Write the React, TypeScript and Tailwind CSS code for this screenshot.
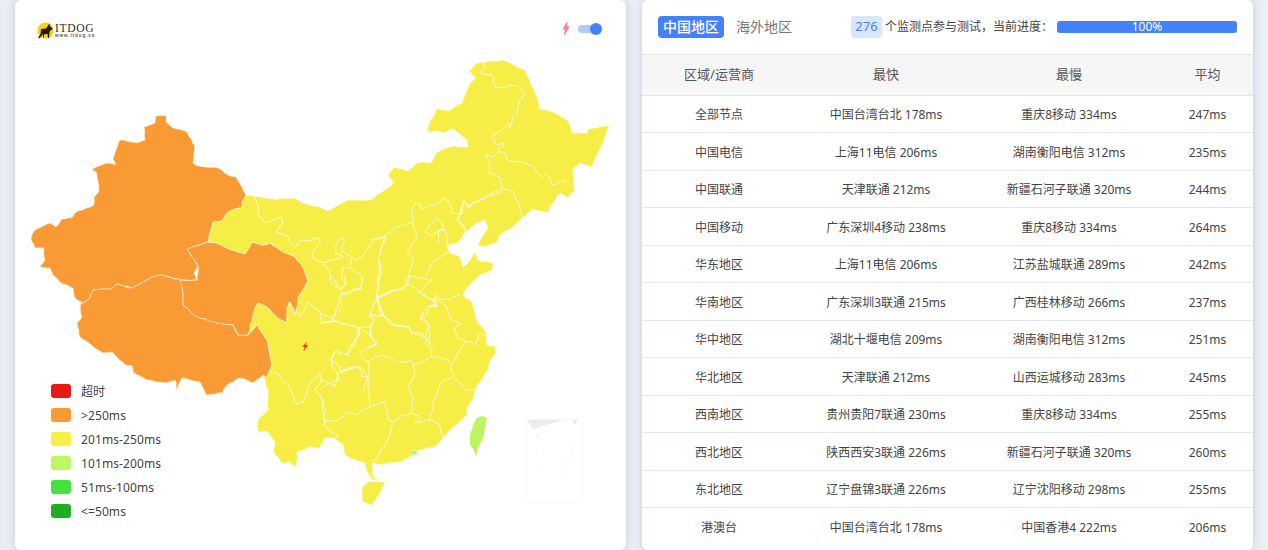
const rows = [
  ["全部节点", "中国台湾台北 178ms", "重庆8移动 334ms", "247ms"],
  ["中国电信", "上海11电信 206ms", "湖南衡阳电信 312ms", "235ms"],
  ["中国联通", "天津联通 212ms", "新疆石河子联通 320ms", "244ms"],
  ["中国移动", "广东深圳4移动 238ms", "重庆8移动 334ms", "264ms"],
  ["华东地区", "上海11电信 206ms", "江苏盐城联通 289ms", "242ms"],
  ["华南地区", "广东深圳3联通 215ms", "广西桂林移动 266ms", "237ms"],
  ["华中地区", "湖北十堰电信 209ms", "湖南衡阳电信 312ms", "251ms"],
  ["华北地区", "天津联通 212ms", "山西运城移动 283ms", "245ms"],
  ["西南地区", "贵州贵阳7联通 230ms", "重庆8移动 334ms", "255ms"],
  ["西北地区", "陕西西安3联通 226ms", "新疆石河子联通 320ms", "260ms"],
  ["东北地区", "辽宁盘锦3联通 226ms", "辽宁沈阳移动 298ms", "255ms"],
  ["港澳台", "中国台湾台北 178ms", "中国香港4 222ms", "206ms"],
];

const legend = [
  ["bg-[#e71a18]", "超时"],
  ["bg-[#f99a35]", ">250ms"],
  ["bg-[#f8ee46]", "201ms-250ms"],
  ["bg-[#bcf764]", "101ms-200ms"],
  ["bg-[#41e341]", "51ms-100ms"],
  ["bg-[#22ac22]", "<=50ms"],
];

const YELLOW = "#f6ee47";
const ORANGE = "#f99a35";

const xinjiang =
  "156,116 166,116 166,122 173,128 187,132 195,147 193,163 197,166 218,168 230,176 236,177 246,195 243,200 242,207 235,209 227,213 222,221 213,222 208,242 187,249 192,257 198,266 194,273 197,280 182,280 160,275 150,278 132,288 117,284 110,289 93,290 90,298 80,305 82,302 75,298 73,288 60,282 53,275 50,268 40,267 45,260 44,248 35,248 31,238 35,230 50,223 56,227 62,219 72,218 75,213 94,205 94,197 99,191 97,173 92,169 108,163 116,165 113,159 120,140 137,143 145,140 144,127 155,123";
const qinghai =
  "208,242 217,243 227,248 245,254 252,242 263,245 270,243 283,252 295,257 303,267 306,275 308,282 298,298 298,303 295,315 290,302 287,308 287,323 277,318 267,307 258,303 255,308 257,323 248,335 238,335 233,325 217,323 197,317 183,305 183,292 180,280 197,280 198,266 192,257 187,249";
const tibet =
  "80,305 90,298 93,290 110,289 117,284 132,288 150,278 160,275 182,280 183,292 183,305 197,317 217,323 233,325 238,335 248,335 257,325 268,342 272,365 267,378 263,375 253,383 240,378 227,385 222,393 206,395 200,382 182,378 177,390 175,380 165,383 157,382 147,380 133,372 132,366 125,365 112,352 103,353 80,337 77,323 82,317";
const china =
  "246,195 253,196 273,199 295,198 303,203 320,207 328,211 348,200 370,200 380,193 393,184 388,175 394,167 408,171 417,163 432,162 437,152 453,146 468,147 467,140 453,129 443,133 437,131 430,133 427,128 437,108 448,111 462,103 470,83 476,78 469,71 477,63 503,60 517,67 525,70 537,97 540,109 553,112 568,121 572,133 587,133 588,129 609,125 606,135 598,153 592,167 580,163 573,169 575,190 568,198 560,193 547,213 533,209 523,218 513,227 500,235 497,242 483,247 478,245 482,237 488,227 485,220 477,223 465,233 457,243 447,245 450,253 460,257 463,267 468,263 475,252 478,260 493,263 492,270 480,275 467,288 463,295 472,302 478,323 486,332 487,345 495,346 496,353 490,360 488,370 480,382 475,390 473,400 467,408 467,415 452,428 443,438 435,447 420,450 410,457 400,462 380,465 372,463 373,477 380,478 372,480 367,472 365,463 355,460 345,455 343,445 333,438 325,438 320,448 310,447 297,452 297,467 292,465 290,462 282,463 274,453 275,443 268,432 258,432 258,420 268,410 268,390 263,375 267,378 272,365 268,342 257,325 248,335 255,308 258,303 267,307 277,318 287,323 287,308 290,302 295,315 298,303 298,298 308,282 306,275 303,267 295,257 283,252 270,243 263,245 252,242 245,254 227,248 217,243 208,242 213,222 222,221 227,213 235,209 242,207 243,200";
const hainan = "362,488 368,482 385,482 380,493 372,505 363,502";
const taiwan = "482,416 487,418 485,428 483,438 478,448 476,457 474,450 470,445 470,435 474,423 477,418";
const hk = "410,454 413,450 416,450 418,454 414,455";

const z8 = [
  "42,17 58,65 50,68 75,98 125,83 128,100 108,125 145,140 158,165 172,168 178,152 208,152 238,142 240,160 218,188 218,205 248,218 310,200 288,190 290,160 305,145 315,150 305,185 335,200 352,212 375,190 400,150 420,145 437,137 415,210 420,240 415,290 410,322 470,300 480,298",
  "335,200 328,232 308,232 305,265 318,280 302,300 275,280 268,240 248,218",
  "328,235 367,258 362,295 335,300 335,312 310,312 300,322 305,350 285,372 275,395 245,398 240,365 205,338 190,365 175,380 168,362 145,335",
  "275,390 325,405 358,412 352,440 330,475",
  "358,415 395,440 410,465 380,475",
  "410,322 430,375 388,378 405,390 390,410 395,440",
  "430,375 470,408 480,410",
];
const z9 = [
  "0,150 45,140 75,112 130,97 125,65 135,40 150,42 155,60 210,35 225,22 240,45 245,70 275,72 278,40 285,32 300,50 345,22 395,5 400,0",
  "130,97 140,145 112,182 130,210 115,258 165,268",
  "45,140 25,210 32,240 20,325",
  "20,325 70,300 100,298 118,258",
  "20,325 40,375 60,400 85,408 118,408 125,428 150,430 170,445 165,458 180,480",
  "165,268 185,270 150,305 172,325 190,328 200,315 215,330 245,328 270,310",
  "165,268 185,220 235,185",
  "205,160 205,122 225,120 235,140 230,155 232,175",
  "180,100 165,125 185,138 205,125 220,115 215,95 200,85 185,100",
  "265,95 278,40",
  "265,95 282,115 285,130",
  "190,328 200,345 180,348 170,375 150,385 178,405 180,460",
];
const z2 = [
  "490,190 497,205 480,218 515,225 530,265 590,255 615,280 595,315 590,345 578,350 570,385 570,370 515,412 530,435 550,430 548,440 535,445 535,455 555,460 565,483 605,485 640,500 665,530 680,520 695,555 735,540 765,565",
  "535,455 520,470 495,465 510,485 507,520 538,530 547,563 580,575 600,620 607,655",
  "547,563 500,590 455,610 445,625 430,602 425,630 412,660 435,680 440,695",
];
const z4 = [
  "345,65 350,95 320,95 302,125 325,150 315,185 335,215 335,245",
  "342,65 380,95 395,135 420,145 403,165 415,190 465,210 480,175 498,182",
  "435,200 415,235 392,270 402,305 365,320 345,370 328,435",
  "465,345 440,345 405,310",
  "335,245 365,250 392,262",
  "335,245 280,270 270,255 250,262 220,255 185,238 148,258 145,320 148,360 150,390",
  "148,395 195,382 205,435 220,440 240,425 270,415 300,422 285,445 330,435 355,445 370,490",
  "280,270 285,300 265,330 277,370 275,415",
  "220,440 205,490 175,540 160,560",
  "15,445 20,435 50,440 80,410 110,420 150,395",
  "0,345 25,325 45,335 55,295 100,275 120,280 125,305 145,305",
  "125,245 120,230 170,205 150,180 155,150 115,160 85,150 40,140 0,145",
  "115,160 120,180 90,215 80,240 50,228 30,255 55,270 65,295 70,285 100,275",
  "125,245 145,265",
  "170,70 150,120 190,122 215,150 265,155 275,175 315,185",
  "170,70 220,50 265,30 270,0",
  "175,0 170,70 180,110 190,122",
  "270,30 300,50 340,80 350,95",
  "0,115 40,130 65,55 125,40 125,0",
  "30,0 60,40 75,30 75,0",
  "0,360 15,405 10,435",
];
const z10 = [
  "40,125 60,135 65,155 85,165 110,225 130,215 150,160 180,130 185,150 165,180 190,210 185,240 195,275",
  "185,150 205,160 240,150 230,125 215,105 220,65 245,70 265,75 295,20 295,0",
  "240,125 300,110 322,140 310,185",
  "195,270 190,285 235,320 215,330",
];

// Breaks long straight edges into short, slightly uneven steps, as real borders are.
function rough(points: string, step: number, amp: number, closed: boolean) {
  const pts = points.split(" ").map((p) => p.split(",").map(Number));
  if (closed) pts.push(pts[0]);
  const out: string[] = [];
  let seed = 1;
  for (let i = 0; i < pts.length - 1; i++) {
    const [x1, y1] = pts[i];
    const [x2, y2] = pts[i + 1];
    const len = Math.hypot(x2 - x1, y2 - y1);
    const n = Math.max(1, Math.round(len / step));
    for (let k = 0; k < n; k++) {
      const t = k / n;
      seed += 1;
      const r = k === 0 ? 0 : Math.sin(seed * 12.9898 + x1 * 78.233) * 43758.5453;
      const j = k === 0 ? 0 : (r - Math.floor(r) - 0.5) * 2 * amp;
      const nx = len ? -(y2 - y1) / len : 0;
      const ny = len ? (x2 - x1) / len : 0;
      out.push(`${(x1 + (x2 - x1) * t + nx * j).toFixed(1)},${(y1 + (y2 - y1) * t + ny * j).toFixed(1)}`);
    }
  }
  if (!closed) out.push(pts[pts.length - 1].join(","));
  return out.join(" ");
}

function Lines({ list, x, y }: { list: string[]; x: number; y: number }) {
  return (
    <g transform={`translate(${x} ${y}) scale(0.3333)`} fill="none" stroke="#ffffff" strokeOpacity="0.92" strokeWidth="2.3" strokeLinejoin="round">
      {list.map((p, i) => (
        <polyline key={i} points={rough(p, 9, 2.4, false)} />
      ))}
    </g>
  );
}

function ChinaMap() {
  return (
    <svg viewBox="15 0 611 550" className="absolute inset-0 w-[611px] h-[550px]">
      <polygon points={rough(xinjiang, 4, 0.6, true)} fill={ORANGE} stroke="#fdeccf" strokeWidth="0.5" />
      <polygon points={rough(tibet, 4, 0.6, true)} fill={ORANGE} stroke="#fdeccf" strokeWidth="0.8" />
      <polygon points={rough(qinghai, 4, 0.6, true)} fill={ORANGE} stroke="#fdeccf" strokeWidth="0.8" />
      <polygon points={rough(china, 4, 0.6, true)} fill={YELLOW} stroke="#ffffff" strokeWidth="0.5" />
      <polygon points={rough(hainan, 4, 0.4, true)} fill={YELLOW} />
      <polygon points={taiwan} fill="#bcf55f" />
      <polygon points={hk} fill="#bcf55f" stroke="#ffffff" strokeWidth="0.5" />
      <Lines list={z8} x={240} y={190} />
      <Lines list={z9} x={370} y={190} />
      <Lines list={z2} x={320} y={0} />
      <Lines list={z4} x={320} y={275} />
      <Lines list={z10} x={260} y={330} />
      <polygon points="306.5,342 302.5,347 304.8,347 303.5,351 308,345.6 305.6,345.6" fill="#f41d12" stroke="#f9842b" strokeWidth="0.4" />
      <rect x="526" y="419.5" width="56" height="83" fill="#ffffff" stroke="#f7f7f7" strokeWidth="0.8" />
      <polygon points="527,420 562,420 533,429" fill="#ececec" />
      <polygon points="572,420 578,420 575,425" fill="#ececec" />
      <polygon points="536,433 541,433 536,439" fill="#f6f6f6" />
      <path d="M537 448v8M572 445v12M538 468l6-6M570 458l-6 10M563 475l-6 8M552 492h-6" stroke="#fafafa" strokeWidth="1" fill="none" />
    </svg>
  );
}

function Logo() {
  return (
    <div className="flex items-center">
      <svg width="17" height="17" viewBox="0 0 17 17" className="mr-px">
        <circle cx="8.5" cy="8.5" r="8" fill="#fdd10f" />
        <path d="M1 16l2.5-4 .5-5 5-.5 3.5-5 .5 2.5L16 7l-2 1-1.5 2-.5 6h-1l-.5-4-3 0-1 4H6l0-4-3 4z" fill="#221c10" />
      </svg>
      <div className="flex flex-col leading-none font-['Liberation_Serif',serif] text-[#33291f]">
        <span className="text-[11.5px] leading-[10px] tracking-[0.7px]">ITDOG</span>
        <span className="text-[4.5px] leading-[5px] font-bold tracking-[0.95px] font-['Liberation_Sans',sans-serif] text-[#555]">www.itdog.cn</span>
      </div>
    </div>
  );
}

function Row({ cells, header, last }: { cells: string[]; header?: boolean; last?: boolean }) {
  const h = header ? "h-[40.5px] bg-[#f6f6f6] text-[13px] text-[#555]" : "h-[37.5px] pt-[2.5px] text-xs text-[#444]";
  return (
    <div className={`grid grid-cols-[154px_180px_186px_91px] items-center text-center ${last ? "" : "border-b border-[#e2e7ed]"} ${h}`}>
      {cells.map((c, i) => (
        <div key={i}>{c}</div>
      ))}
    </div>
  );
}

export default function App() {
  return (
    <div className="h-[550px] w-[1268px] overflow-hidden bg-[#ebeef4] flex gap-4 px-[15px] font-['Noto_Sans','Noto_Sans_CJK_SC',sans-serif]">
      <div className="relative w-[611px] h-[550px] bg-white rounded-md shadow-[0_0_8px_rgba(130,145,170,0.35)] overflow-hidden">
        <ChinaMap />
        <div className="relative flex items-center justify-between pl-[22px] pr-6 pt-[22px]">
          <Logo />
          <div className="flex items-center gap-2">
            <svg width="8" height="13" viewBox="0 0 8 13" className="-mt-1">
              <path d="M5 0.5 1.2 7h2.4L2.4 12.5 7 5H4.4z" fill="#ff8a8a" stroke="#ff5c5c" strokeWidth="0.7" strokeLinejoin="round" />
            </svg>
            <div className="relative w-6 h-2 rounded-full bg-[#b1c9ff] -mt-1">
              <div className="absolute right-0 -top-0.5 w-3 h-3 rounded-full bg-[#4580ff]" />
            </div>
          </div>
        </div>
        <div className="absolute left-9 top-[379px] flex flex-col text-xs text-[#444]">
          {legend.map(([c, t]) => (
            <div key={t} className="flex items-center h-6 gap-2.5">
              <span className={`w-5 h-3.5 rounded-[3px] ${c}`} />
              <span className="mt-0.5 tracking-[0.1px]">{t}</span>
            </div>
          ))}
        </div>
      </div>
      <div className="w-[611px] h-[550px] bg-white rounded-md shadow-[0_0_8px_rgba(130,145,170,0.35)] overflow-hidden">
        <div className="h-[55px] flex items-center px-4 border-b border-[#e2e7ed]">
          <div className="w-[66px] h-[22px] rounded bg-[#4580ff] text-white text-sm font-medium flex items-center justify-center">中国地区</div>
          <div className="ml-3 text-sm text-[#777]">海外地区</div>
          <div className="ml-[59px] w-[31px] h-[22px] rounded bg-[#d9e6ff] text-[#4580ff] text-[13px] flex items-center justify-center">276</div>
          <div className="ml-[3px] text-xs text-[#444] w-[172px] whitespace-nowrap">个监测点参与测试，当前进度：</div>
          <div className="w-[180px] h-3 rounded-[3px] bg-[#4580ff] text-white text-xs leading-3 text-center">100%</div>
        </div>
        <Row header cells={["区域/运营商", "最快", "最慢", "平均"]} />
        {rows.map((r, i) => (
          <Row key={r[0]} cells={r} last={i === rows.length - 1} />
        ))}
      </div>
    </div>
  );
}
